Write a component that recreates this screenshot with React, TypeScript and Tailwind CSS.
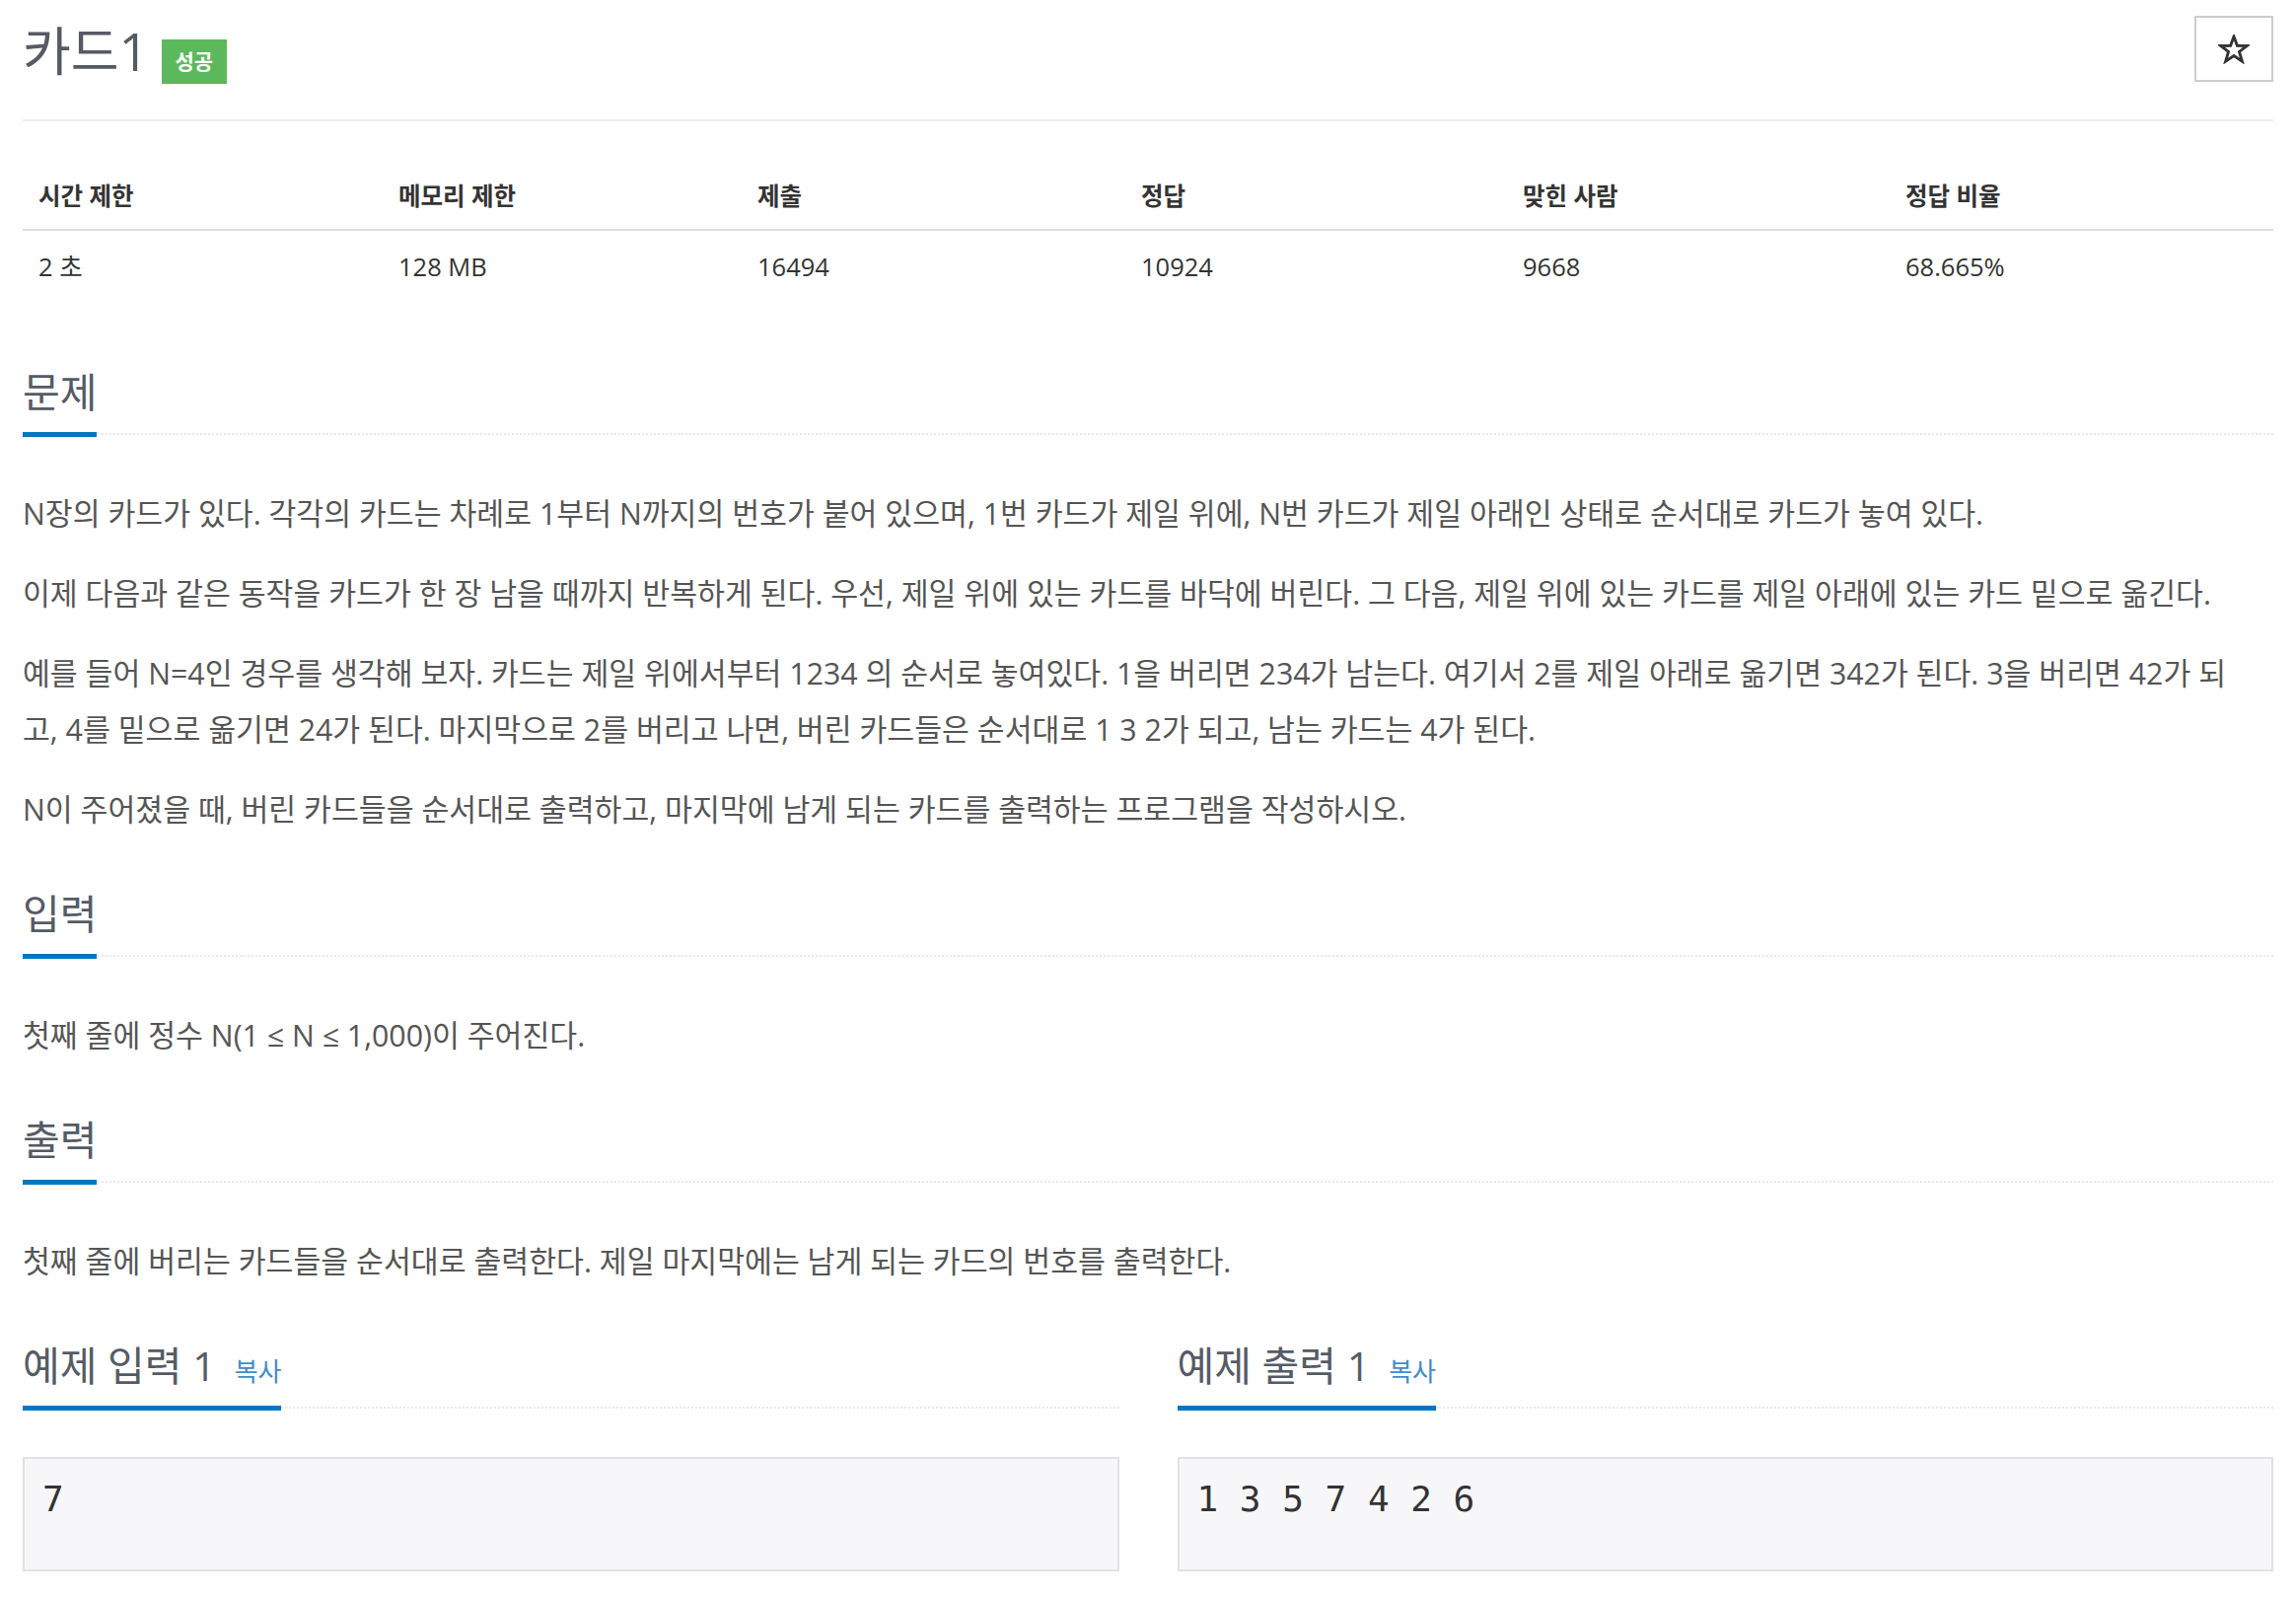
import React from "react";

const FONT = { fontFamily: '"Open Sans", "Noto Sans CJK KR", sans-serif' };

const stats = [
  { label: "시간 제한", value: "2 초", w: "w-[365px]" },
  { label: "메모리 제한", value: "128 MB", w: "w-[364px]" },
  { label: "제출", value: "16494", w: "w-[389px]" },
  { label: "정답", value: "10924", w: "w-[387px]" },
  { label: "맞힌 사람", value: "9668", w: "w-[388px]" },
  { label: "정답 비율", value: "68.665%", w: "" },
];

function Headline({ children }: { children: React.ReactNode }) {
  return (
    <div className="flex items-end">
      <h2 className="text-[41px] leading-[42px] pb-[20px] border-b-[5px] border-[#0076c0] text-[#555b65] whitespace-nowrap">
        {children}
      </h2>
      <div className="flex-1 border-b-2 border-dotted border-[#e4e9f0] mb-[2px]" />
    </div>
  );
}

function Section({ title, children }: { title: string; children: React.ReactNode }) {
  return (
    <section className="mt-[56px] first:mt-0">
      <Headline>{title}</Headline>
      <div className="mt-[49px] flex flex-col gap-[24px] text-[30.3px] leading-[57px] text-[#555]">{children}</div>
    </section>
  );
}

function Sample({ title, data }: { title: string; data: string }) {
  return (
    <div>
      <Headline>
        {title}
        <button className="ml-[19px] text-[26px] leading-none text-[#428bca] align-baseline">복사</button>
      </Headline>
      <pre
        className="mt-[47px] h-[116px] border-2 border-[#e1e1e8] bg-[#f7f7f9] pt-[17px] px-[18px] text-[36px] leading-[48px] text-[#333]"
        style={{ fontFamily: '"DejaVu Sans Mono", "Liberation Mono", monospace' }}
      >
        {data}
      </pre>
    </div>
  );
}

export default function App() {
  return (
    <div className="bg-white min-h-screen px-[23px] pb-[40px]" style={FONT}>
      <div className="flex justify-between pt-[16px] pb-[36px] border-b-2 border-[#eee]">
        <div className="flex items-start">
          <h1 className="mt-[6px] text-[53px] leading-[60px] text-[#555b65] font-normal">카드1</h1>
          <span className="ml-[13px] mt-[24px] w-[66px] h-[45px] flex items-center justify-center bg-[#5cb85c] text-white text-[21px] font-bold">
            성공
          </span>
        </div>
        <button className="w-[80px] h-[67px] border-2 border-[#ccc] flex items-center justify-center">
          <svg width="32" height="30" viewBox="0 0 24 23" fill="none" stroke="#333" strokeWidth="2.2" strokeLinejoin="miter">
            <polygon points="12,1.5 14.6,8.6 22.2,8.8 16.2,13.4 18.4,20.8 12,16.5 5.6,20.8 7.8,13.4 1.8,8.8 9.4,8.6" />
          </svg>
        </button>
      </div>

      <table className="mt-[43px] w-full border-collapse text-[25.5px] text-[#333]">
        <thead>
          <tr className="border-b-2 border-[#ddd]">
            {stats.map((s) => (
              <th key={s.label} className={`${s.w} text-left text-[24.5px] font-bold px-[16px] pt-[16px] pb-[16px] leading-[34px]`}>
                {s.label}
              </th>
            ))}
          </tr>
        </thead>
        <tbody>
          <tr>
            {stats.map((s) => (
              <td key={s.label} className="px-[16px] pt-[19px] pb-[16px] leading-[34px]">
                {s.value}
              </td>
            ))}
          </tr>
        </tbody>
      </table>

      <div className="mt-[73px]">
        <Section title="문제">
          <p>
            N장의 카드가 있다. 각각의 카드는 차례로 1부터 N까지의 번호가 붙어 있으며, 1번 카드가 제일 위에, N번 카드가 제일 아래인 상태로 순서대로 카드가 놓여 있다.
          </p>
          <p>
            이제 다음과 같은 동작을 카드가 한 장 남을 때까지 반복하게 된다. 우선, 제일 위에 있는 카드를 바닥에 버린다. 그 다음, 제일 위에 있는 카드를 제일 아래에 있는 카드 밑으로 옮긴다.
          </p>
          <p>
            예를 들어 N=4인 경우를 생각해 보자. 카드는 제일 위에서부터 1234 의 순서로 놓여있다. 1을 버리면 234가 남는다. 여기서 2를 제일 아래로 옮기면 342가 된다. 3을 버리면 42가 되
            <br />
            고, 4를 밑으로 옮기면 24가 된다. 마지막으로 2를 버리고 나면, 버린 카드들은 순서대로 1 3 2가 되고, 남는 카드는 4가 된다.
          </p>
          <p>N이 주어졌을 때, 버린 카드들을 순서대로 출력하고, 마지막에 남게 되는 카드를 출력하는 프로그램을 작성하시오.</p>
        </Section>
        <Section title="입력">
          <p>첫째 줄에 정수 N(1 ≤ N ≤ 1,000)이 주어진다.</p>
        </Section>
        <Section title="출력">
          <p>첫째 줄에 버리는 카드들을 순서대로 출력한다. 제일 마지막에는 남게 되는 카드의 번호를 출력한다.</p>
        </Section>

        <div className="mt-[56px] grid grid-cols-2 gap-x-[59px]">
          <Sample title="예제 입력 1" data="7" />
          <Sample title="예제 출력 1" data="1 3 5 7 4 2 6" />
        </div>
      </div>
    </div>
  );
}
